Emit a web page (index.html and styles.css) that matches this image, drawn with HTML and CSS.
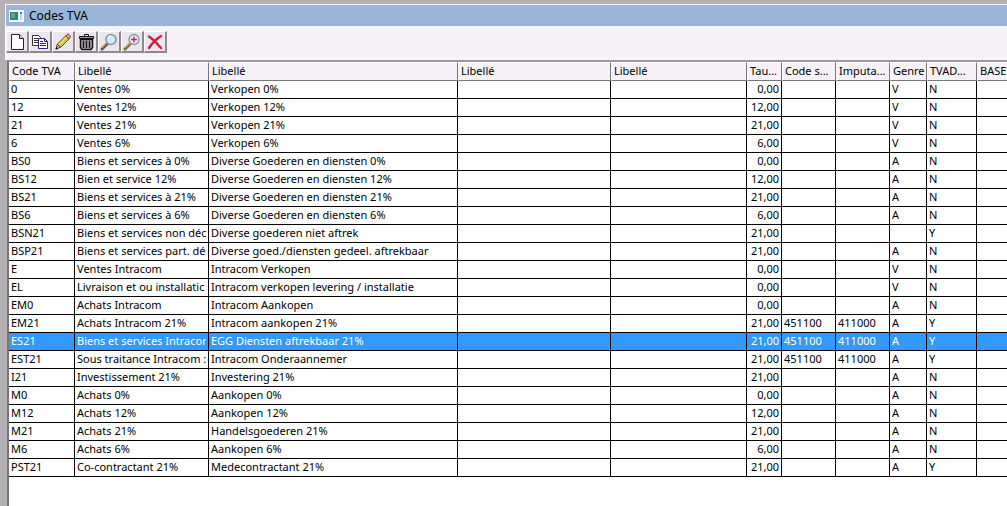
FILE: index.html
```
<!DOCTYPE html>
<html lang="fr">
<head>
<meta charset="utf-8">
<title>Codes TVA</title>
<link rel="stylesheet" href="styles.css">
</head>
<body>
<main class="window">
  <header class="titlebar">
    <svg class="app-icon" width="15" height="12" viewBox="0 0 15 12" aria-hidden="true">
      <rect width="15" height="12" fill="#f4f8fa"/><rect x="1" y="2" width="8" height="8" fill="#2f7f80"/><rect x="2" y="3" width="4" height="5" fill="#5aa79a"/><rect x="11" y="2" width="2" height="2" fill="#4a6fa8"/><rect x="11" y="5" width="2" height="5" fill="#c3d3dc"/>
    </svg>
    <h1 class="title">Codes TVA</h1>
  </header>
  <div class="toolbar" role="toolbar" aria-label="Actions">
    <button class="tool" type="button" aria-label="Nouveau"><svg width="20" height="20" viewBox="0 0 20 20"><path d="M4.500 2.500h8l4 4v11h-12z" fill="#fff" stroke="#222"/><path d="M12.500 2.500v4h4" fill="#ddd" stroke="#222"/></svg></button>
    <button class="tool" type="button" aria-label="Copier"><svg width="20" height="20" viewBox="0 0 20 20"><path d="M2.500 3.500h6l2 2v8h-8z" fill="#fff" stroke="#333"/><path d="M4 6.500h4M4 8.500h5M4 10.500h5" stroke="#333"/><path d="M8.500 6.500h6l3 3v7h-9z" fill="#fff" stroke="#23238e"/><path d="M14.500 6.500v3h3M10 9.500h3M10 11.500h6M10 13.500h6" fill="none" stroke="#23238e"/></svg></button>
    <button class="tool" type="button" aria-label="Modifier"><svg width="20" height="20" viewBox="0 0 20 20"><path d="M3 17l1.500-5L13 3.500l3.500 3L8 15z" fill="#d6cf3c" stroke="#55501c"/><path d="M5.500 13L14 4.500" stroke="#f6f3a0"/><path d="M12.500 4l1.500-1.500q1-1 2 0l1 1q1 1 0 2L15.800 7z" fill="#e69a8c" stroke="#6d3b30"/><path d="M3 17l1.500-4.500L7.500 15z" fill="#e9cfa0" stroke="#444"/><path d="M2.500 17.500l.8-2.500 1.700 1.700z" fill="#111"/></svg></button>
    <button class="tool" type="button" aria-label="Supprimer"><svg width="20" height="20" viewBox="0 0 20 20"><path d="M8.500 4V2.500h4V4" fill="none" stroke="#111"/><path d="M3.500 4.500h14v2h-14z" fill="#999" stroke="#111"/><path d="M4.500 7.500h12v8l-1.500 2H6l-1.500-2z" fill="#b5b2b5" stroke="#111" stroke-width="1.500"/><path d="M7.500 9v7M10.500 9v7M13.500 9v7" stroke="#111" stroke-width="1.500"/></svg></button>
    <button class="tool" type="button" aria-label="Rechercher"><svg width="20" height="20" viewBox="0 0 20 20"><path d="M3 17l5-5" stroke="#71532b" stroke-width="3" stroke-linecap="round"/><path d="M3 16l5-5" stroke="#d8a35c"/><circle cx="12" cy="7.500" r="5" fill="#c9f0fa" stroke="#8291a8" stroke-width="1.500"/><path d="M9 7q.5-3 3-3" fill="none" stroke="#fff" stroke-width="1.500"/></svg></button>
    <button class="tool" type="button" aria-label="Agrandir"><svg width="20" height="20" viewBox="0 0 20 20"><path d="M3 17l5-5" stroke="#84633a" stroke-width="3" stroke-linecap="round"/><path d="M3 16l5-5" stroke="#dfb06c"/><circle cx="12" cy="7.500" r="5" fill="#e4f5fb" stroke="#8495aa" stroke-width="1.300"/><path d="M9 7.500h6M12 4.500v6" stroke="#c32a4e" stroke-width="1.500"/></svg></button>
    <button class="tool" type="button" aria-label="Fermer"><svg width="20" height="20" viewBox="0 0 20 20"><path d="M4 4.500Q9 8 16 16M16 4Q9 8.500 4 16" fill="none" stroke="#cc1f3c" stroke-width="2.500" stroke-linecap="round"/></svg></button>
  </div>
  <section class="grid">
    <table class="codes">
      <colgroup><col class="c-code"><col class="c-fr"><col class="c-nl"><col class="c-l3"><col class="c-l4"><col class="c-rate"><col class="c-acc"><col class="c-acc"><col class="c-type"><col class="c-vat"><col></colgroup>
      <thead><tr><th>Code TVA</th><th>Libellé</th><th>Libellé</th><th>Libellé</th><th>Libellé</th><th>Tau...</th><th>Code s...</th><th>Imputa...</th><th>Genre</th><th>TVAD...</th><th>BASE</th></tr></thead>
      <tbody>
        <tr><td>0</td><td>Ventes 0%</td><td>Verkopen 0%</td><td></td><td></td><td class="num">0,00</td><td></td><td></td><td>V</td><td>N</td><td></td></tr>
        <tr><td>12</td><td>Ventes 12%</td><td>Verkopen 12%</td><td></td><td></td><td class="num">12,00</td><td></td><td></td><td>V</td><td>N</td><td></td></tr>
        <tr><td>21</td><td>Ventes 21%</td><td>Verkopen 21%</td><td></td><td></td><td class="num">21,00</td><td></td><td></td><td>V</td><td>N</td><td></td></tr>
        <tr><td>6</td><td>Ventes 6%</td><td>Verkopen 6%</td><td></td><td></td><td class="num">6,00</td><td></td><td></td><td>V</td><td>N</td><td></td></tr>
        <tr><td>BS0</td><td>Biens et services à 0%</td><td>Diverse Goederen en diensten 0%</td><td></td><td></td><td class="num">0,00</td><td></td><td></td><td>A</td><td>N</td><td></td></tr>
        <tr><td>BS12</td><td>Bien et service 12%</td><td>Diverse Goederen en diensten 12%</td><td></td><td></td><td class="num">12,00</td><td></td><td></td><td>A</td><td>N</td><td></td></tr>
        <tr><td>BS21</td><td>Biens et services à 21%</td><td>Diverse Goederen en diensten 21%</td><td></td><td></td><td class="num">21,00</td><td></td><td></td><td>A</td><td>N</td><td></td></tr>
        <tr><td>BS6</td><td>Biens et services à 6%</td><td>Diverse Goederen en diensten 6%</td><td></td><td></td><td class="num">6,00</td><td></td><td></td><td>A</td><td>N</td><td></td></tr>
        <tr><td>BSN21</td><td><div class="clip">Biens et services non déc</div></td><td>Diverse goederen niet aftrek</td><td></td><td></td><td class="num">21,00</td><td></td><td></td><td></td><td>Y</td><td></td></tr>
        <tr><td>BSP21</td><td><div class="clip">Biens et services part. dé</div></td><td>Diverse goed./diensten gedeel. aftrekbaar</td><td></td><td></td><td class="num">21,00</td><td></td><td></td><td>A</td><td>N</td><td></td></tr>
        <tr><td>E</td><td>Ventes Intracom</td><td>Intracom Verkopen</td><td></td><td></td><td class="num">0,00</td><td></td><td></td><td>V</td><td>N</td><td></td></tr>
        <tr><td>EL</td><td><div class="clip">Livraison et ou installatic</div></td><td>Intracom verkopen levering / installatie</td><td></td><td></td><td class="num">0,00</td><td></td><td></td><td>V</td><td>N</td><td></td></tr>
        <tr><td>EM0</td><td>Achats Intracom</td><td>Intracom Aankopen</td><td></td><td></td><td class="num">0,00</td><td></td><td></td><td>A</td><td>N</td><td></td></tr>
        <tr><td>EM21</td><td>Achats Intracom 21%</td><td>Intracom aankopen 21%</td><td></td><td></td><td class="num">21,00</td><td>451100</td><td>411000</td><td>A</td><td>Y</td><td></td></tr>
        <tr class="selected" aria-selected="true"><td>ES21</td><td><div class="clip">Biens et services Intracor</div></td><td>EGG Diensten aftrekbaar 21%</td><td></td><td></td><td class="num">21,00</td><td>451100</td><td>411000</td><td>A</td><td>Y</td><td></td></tr>
        <tr><td>EST21</td><td><div class="clip">Sous traitance Intracom :</div></td><td>Intracom Onderaannemer</td><td></td><td></td><td class="num">21,00</td><td>451100</td><td>411000</td><td>A</td><td>Y</td><td></td></tr>
        <tr><td>I21</td><td>Investissement 21%</td><td>Investering 21%</td><td></td><td></td><td class="num">21,00</td><td></td><td></td><td>A</td><td>N</td><td></td></tr>
        <tr><td>M0</td><td>Achats 0%</td><td>Aankopen 0%</td><td></td><td></td><td class="num">0,00</td><td></td><td></td><td>A</td><td>N</td><td></td></tr>
        <tr><td>M12</td><td>Achats 12%</td><td>Aankopen 12%</td><td></td><td></td><td class="num">12,00</td><td></td><td></td><td>A</td><td>N</td><td></td></tr>
        <tr><td>M21</td><td>Achats 21%</td><td>Handelsgoederen 21%</td><td></td><td></td><td class="num">21,00</td><td></td><td></td><td>A</td><td>N</td><td></td></tr>
        <tr><td>M6</td><td>Achats 6%</td><td>Aankopen 6%</td><td></td><td></td><td class="num">6,00</td><td></td><td></td><td>A</td><td>N</td><td></td></tr>
        <tr><td>PST21</td><td>Co-contractant 21%</td><td>Medecontractant 21%</td><td></td><td></td><td class="num">21,00</td><td></td><td></td><td>A</td><td>Y</td><td></td></tr>
      </tbody>
    </table>
  </section>
</main>
</body>
</html>
```
FILE: styles.css
```
* { box-sizing: border-box; }

body {
  margin: 0;
  background: #b2b0b2;
  color: #000;
  font: 11px/15px "Noto Sans", "Open Sans", sans-serif;
}

.window {
  display: flex;
  flex-direction: column;
  min-height: 100vh;
  padding: 4px 0 0 5px;
  overflow: hidden;
}

.titlebar {
  display: flex;
  align-items: center;
  gap: 5px;
  height: 22px;
  padding-left: 3px;
  background: #9ab5d7;
  border-top: 1px solid #f4f4f8;
  border-left: 1px solid #f4f4f8;
}

.app-icon { display: block; }

.title {
  margin: 0;
  font-size: 12px;
  font-weight: 400;
}

.toolbar {
  display: flex;
  height: 34px;
  padding-top: 5px;
  background: #f7f2f7;
  border-left: 1px solid #fff;
}

.tool {
  display: flex;
  align-items: center;
  justify-content: center;
  width: 23px;
  height: 22px;
  padding: 0;
  background: #ebe6eb;
  border: 1px solid #fff;
  border-right: 2px solid #8d898d;
  border-bottom: 2px solid #8d898d;
}

.tool svg { flex: none; }

.grid {
  flex: 1;
  margin-left: 2px;
  background: #fff;
  border-top: 2px solid #9c989c;
  border-left: 2px solid #777577;
  overflow: hidden;
}

.codes {
  width: 100%;
  table-layout: fixed;
  border-collapse: separate;
  border-spacing: 0;
}

.c-code { width: 66px; }
.c-fr { width: 134px; }
.c-nl { width: 249px; }
.c-l3 { width: 153px; }
.c-l4 { width: 136px; }
.c-rate { width: 35px; }
.c-acc { width: 54px; }
.c-type { width: 37px; }
.c-vat { width: 50px; }

.codes th,
.codes td {
  overflow: hidden;
  white-space: nowrap;
  text-align: left;
  font-weight: 400;
}

.codes th {
  height: 19px;
  padding: 0 0 2px 2px;
  background: #f7f2f7;
  border: 1px solid #fff;
  border-right-color: #777577;
  border-bottom-color: #777577;
}

.codes td {
  height: 18px;
  padding: 0 2px;
  padding-bottom: 2px;
  border-right: 1px solid #000;
  border-bottom: 1px solid #000;
}

.codes td:last-child,
.codes th:last-child { border-right: 0; }

.codes .num { text-align: right; }

.codes .clip { overflow: hidden; }

.codes .selected td {
  background: #3399fb;
  color: #fff;
}
```
